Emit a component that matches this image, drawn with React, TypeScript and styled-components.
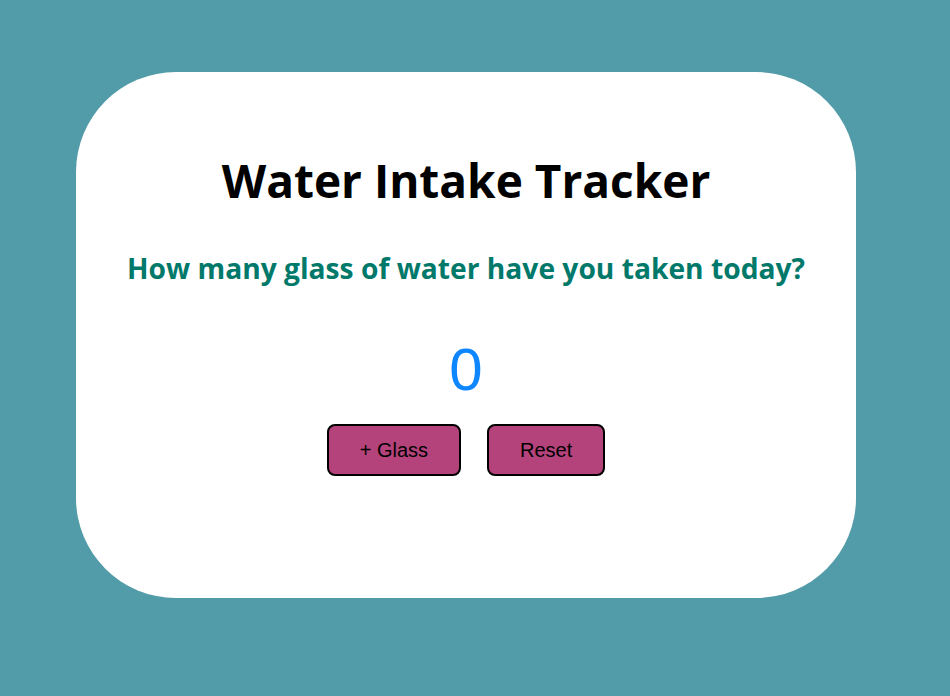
import { useState } from 'react';
import styled, { createGlobalStyle } from 'styled-components';

const GlobalStyle = createGlobalStyle`
  html, body {
    margin: 0;
    padding: 0;
    background-color: #529ba8;
  }
`;

const Page = styled.div`
  min-height: 696px;
  padding: 72px 0 0 76px;
  box-sizing: border-box;
`;

const Card = styled.div`
  width: 780px;
  height: 526px;
  box-sizing: border-box;
  background-color: #fff;
  border-radius: 100px;
  display: flex;
  flex-direction: column;
  align-items: center;
  padding-top: 78px;
`;

const Title = styled.h1`
  margin: 0;
  font-family: 'Open Sans', 'Noto Sans', sans-serif;
  font-weight: 700;
  font-size: 46px;
  line-height: 60px;
  color: #000;
`;

const Question = styled.h2`
  margin: 42px 0 0;
  font-family: 'Open Sans', 'Noto Sans', sans-serif;
  font-weight: 700;
  font-size: 28.2px;
  line-height: 32px;
  color: #00796b;
`;

const Count = styled.div`
  margin-top: 50px;
  font-family: 'Liberation Sans', Arial, sans-serif;
  font-size: 60px;
  line-height: 72px;
  color: #0d86ff;
`;

const Actions = styled.div`
  display: flex;
  gap: 26px;
  margin-top: 18px;
`;

const Button = styled.button`
  font-family: 'Liberation Sans', Arial, sans-serif;
  font-size: 20px;
  line-height: 24px;
  padding: 12px 31px;
  color: #000;
  background-color: #b3437a;
  border: 2px solid #000;
  border-radius: 8px;
  cursor: pointer;
`;

const App = () => {
  const [glasses, setGlasses] = useState(0);

  return (
    <>
      <GlobalStyle />
      <Page>
        <Card>
          <Title>Water Intake Tracker</Title>
          <Question>How many glass of water have you taken today?</Question>
          <Count>{glasses}</Count>
          <Actions>
            <Button onClick={() => setGlasses(glasses + 1)}>+ Glass</Button>
            <Button onClick={() => setGlasses(0)}>Reset</Button>
          </Actions>
        </Card>
      </Page>
    </>
  );
};

export default App;
